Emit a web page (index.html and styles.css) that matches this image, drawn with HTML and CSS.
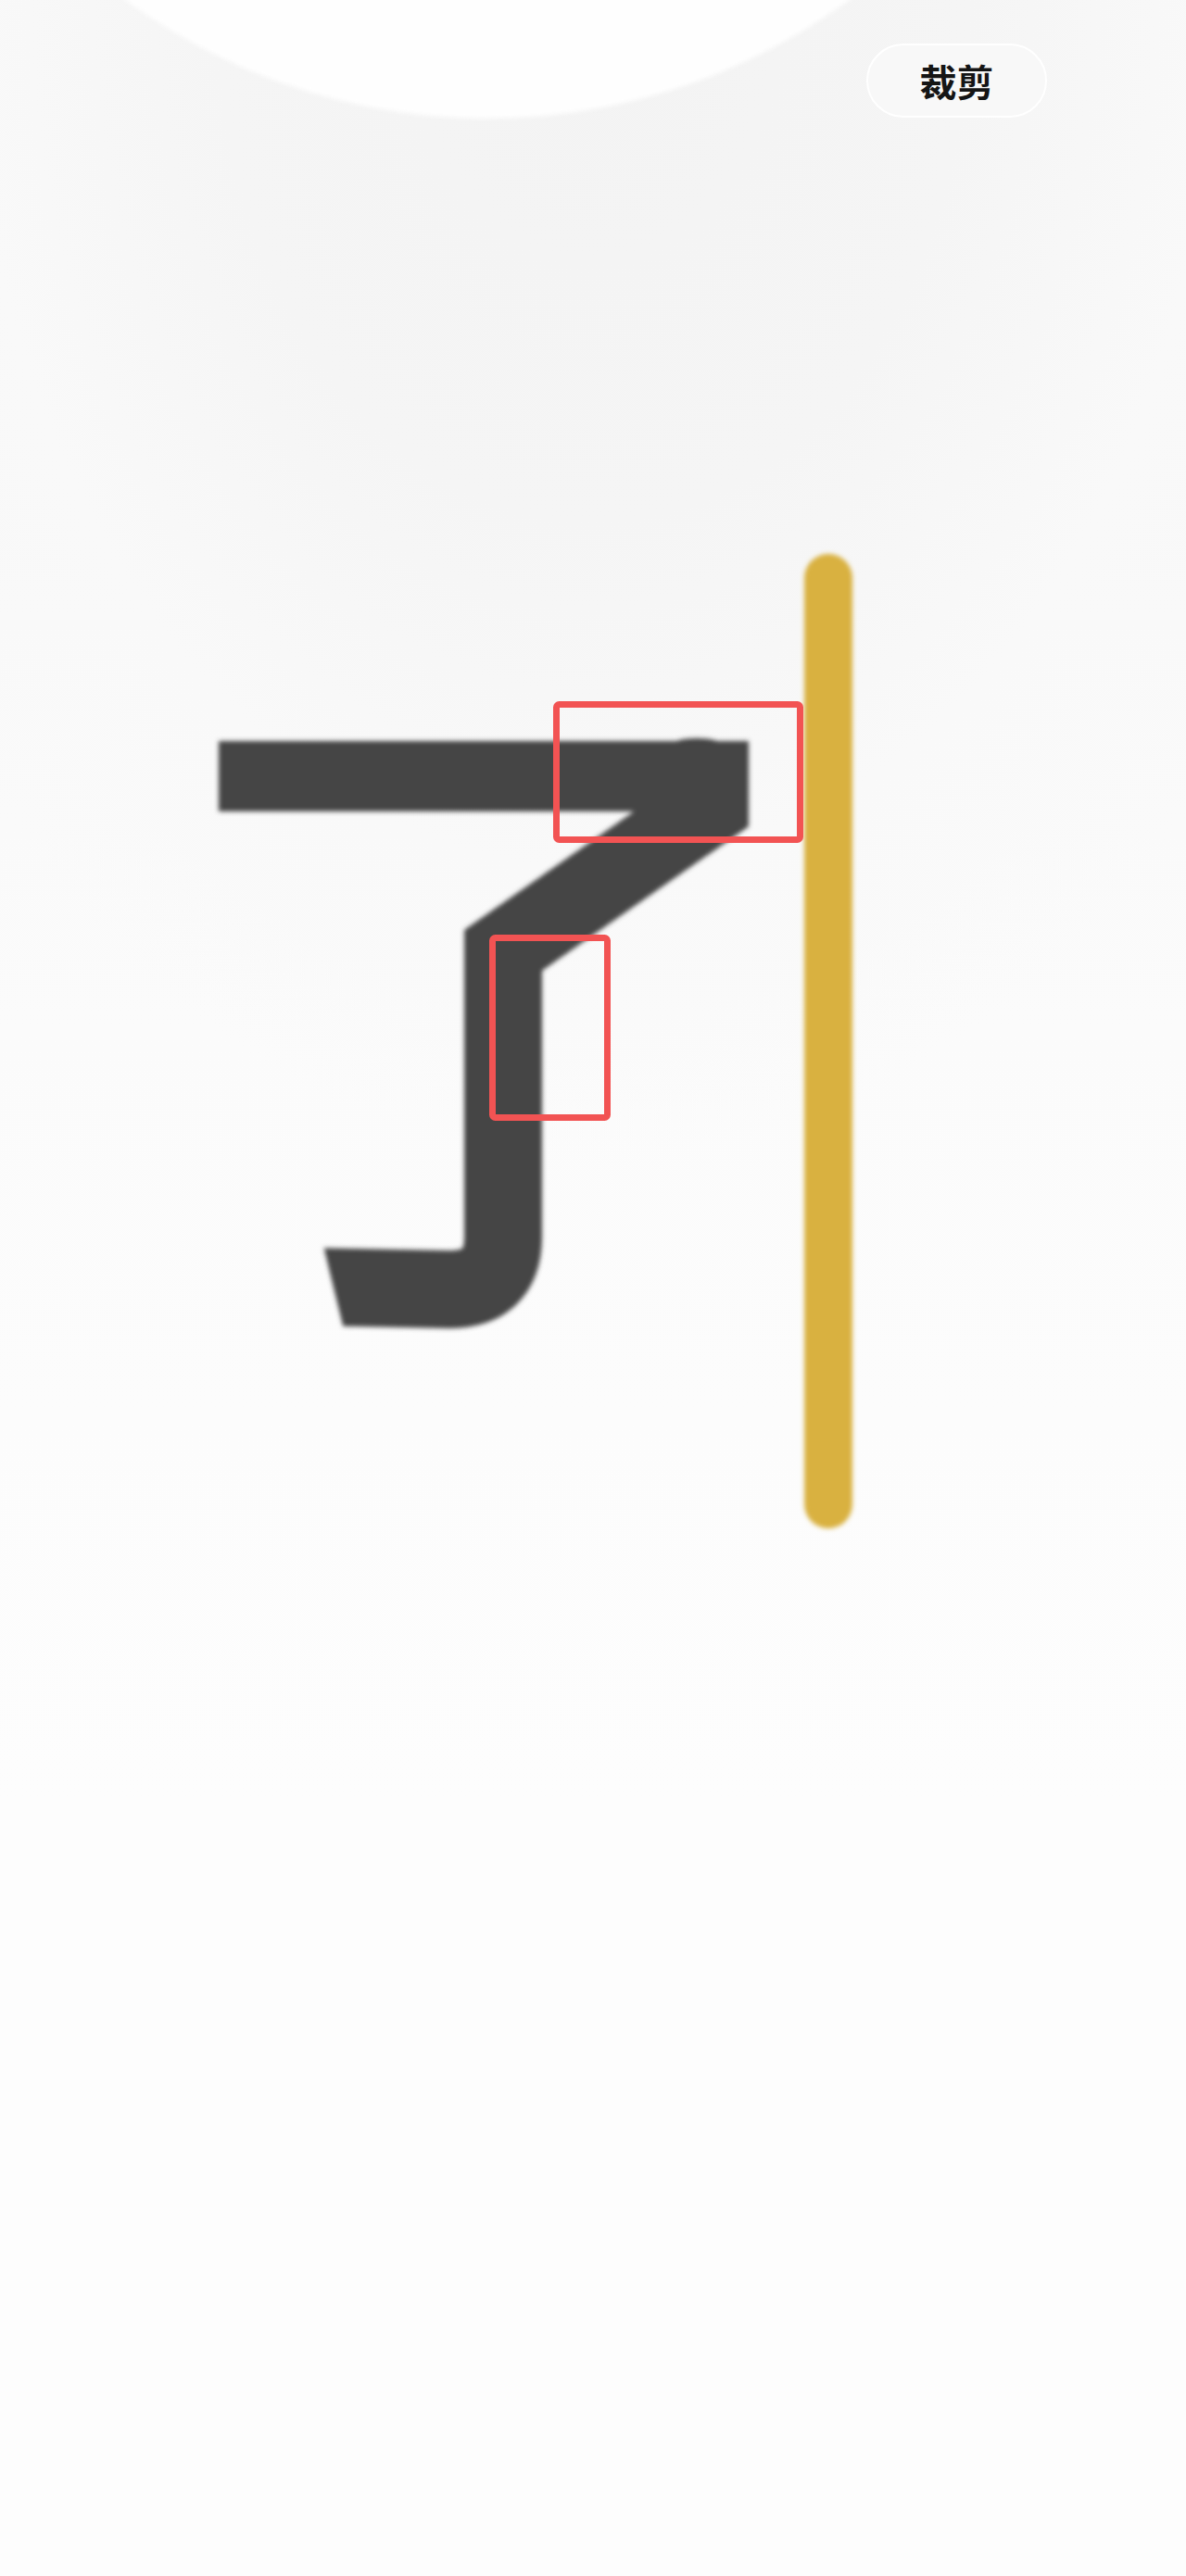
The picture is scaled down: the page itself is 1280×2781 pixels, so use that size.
FILE: index.html
```html
<!DOCTYPE html>
<html lang="zh-CN">
<head>
<meta charset="utf-8">
<title>裁剪</title>
<link rel="stylesheet" href="styles.css">
</head>
<body>
<div class="page">
  <div class="halo" aria-hidden="true"></div>
  <header class="toolbar">
    <button class="crop-btn" type="button">裁剪</button>
  </header>
  <main class="canvas">
    <svg class="board" viewBox="0 127 1280 2654" width="1280" height="2654" role="img" aria-label="了">
      <defs>
        <filter id="soft" filterUnits="userSpaceOnUse" x="0" y="0" width="1280" height="2781">
          <feGaussianBlur stdDeviation="2.4"/>
        </filter>
        <clipPath id="cut">
          <polygon points="0,803 808,803 808,1480 382,1480 338,1300 0,1300"/>
        </clipPath>
      </defs>
      <g class="ink" filter="url(#soft)">
        <line x1="236" y1="838" x2="808" y2="838" class="stroke-h"/>
        <ellipse cx="752" cy="805" rx="28" ry="8" class="ink-fill"/>
        <path d="M 838 820 L 543 1026 L 543 1335 Q 543 1392 485 1392 L 330 1389" class="stroke-main" clip-path="url(#cut)"/>
      </g>
      <rect x="868" y="598" width="52" height="1052" rx="26" class="cursor" filter="url(#soft)"/>
      <rect x="600.5" y="760.5" width="263" height="146" rx="3" class="mark"/>
      <rect x="531.5" y="1012.5" width="124" height="194" rx="3" class="mark"/>
    </svg>
  </main>
</div>
</body>
</html>
```
FILE: styles.css
```css
html, body {
  margin: 0;
  padding: 0;
}
body {
  font-family: "Noto Sans CJK SC", "Noto Sans", "Liberation Sans", sans-serif;
  background: #fdfdfd;
}
.page {
  position: relative;
  width: 1280px;
  height: 2781px;
  overflow: hidden;
  background:
    radial-gradient(ellipse 900px 1250px at 50% 0%, #f3f3f3 0%, #f5f5f5 45%, #f9f9f9 75%, rgba(252,252,252,0) 100%),
    linear-gradient(#f6f6f6 0%, #fbfbfb 40%, #fdfdfd 70%, #fdfdfd 100%);
}
.halo {
  position: absolute;
  left: -134px;
  top: -1192px;
  width: 1320px;
  height: 1320px;
  border-radius: 50%;
  background: #fefefe;
  filter: blur(2.5px);
}
.toolbar {
  position: relative;
  display: flex;
  justify-content: flex-end;
  padding: 47px 150px 0 0;
}
.crop-btn {
  box-sizing: border-box;
  width: 195px;
  height: 80px;
  border-radius: 40px;
  border: 2px solid #ffffff;
  background: #f8f8f8;
  color: #151515;
  font-family: "Noto Sans CJK SC", "Noto Sans", sans-serif;
  font-weight: 700;
  font-size: 40px;
  line-height: 1;
  padding: 0;
  display: flex;
  align-items: center;
  justify-content: center;
}
.canvas {
  position: relative;
}
.board {
  display: block;
}
.ink {
  fill: none;
  stroke: #444444;
}
.stroke-h {
  stroke-width: 76;
  stroke-linecap: butt;
}
.stroke-main {
  fill: none;
  stroke-width: 84;
  stroke-linecap: butt;
  stroke-linejoin: miter;
}
.ink-fill {
  fill: #444444;
  stroke: none;
}
.cursor {
  fill: #d9b13f;
  stroke: none;
}
.mark {
  fill: none;
  stroke: #f25353;
  stroke-width: 7;
}
```
